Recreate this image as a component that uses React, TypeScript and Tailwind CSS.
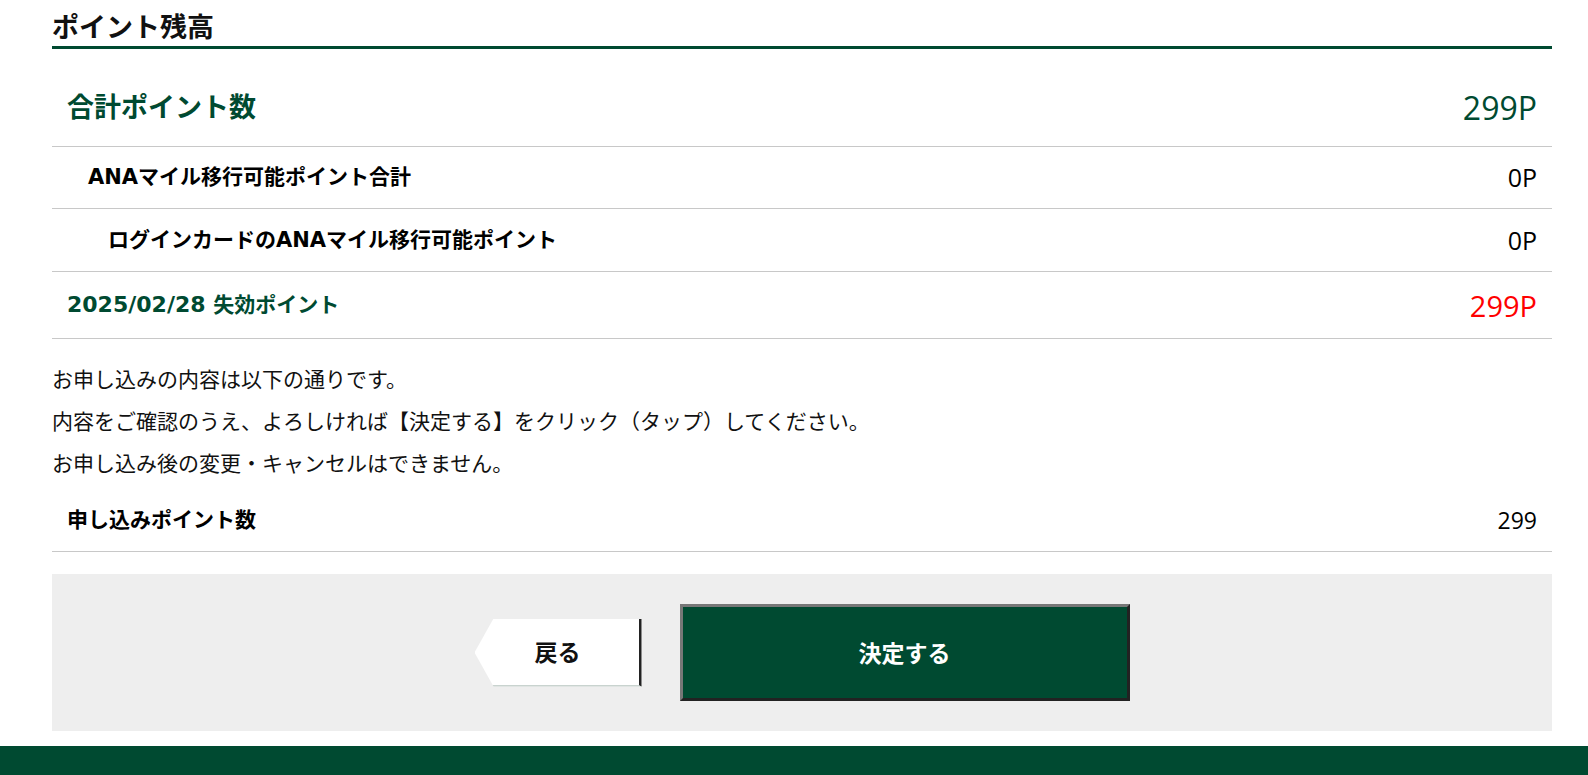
import React from "react";

const GREEN = "text-[#004a31]";

function Row({
  label,
  value,
  labelClass,
  valueClass,
  heightClass,
  padClass,
}: {
  label: React.ReactNode;
  value: string;
  labelClass: string;
  valueClass: string;
  heightClass: string;
  padClass: string;
}) {
  return (
    <div className={`flex items-center justify-between border-b border-[#c8c8c8] pr-[15px] ${heightClass} ${padClass}`}>
      <div className={`font-['DejaVu_Sans','Noto_Sans_CJK_JP',sans-serif] font-bold leading-none ${labelClass}`}>{label}</div>
      <div className={`font-['Open_Sans','Noto_Sans',sans-serif] leading-none ${valueClass}`}>{value}</div>
    </div>
  );
}

export default function App() {
  return (
    <div className="w-[1588px] bg-white font-['Noto_Sans_CJK_JP',sans-serif] text-black">
      <div className="ml-[52px] w-[1500px]">
        <h2 className="border-b-[3px] border-[#004a31] pt-[6px] text-[27px] font-bold leading-[40px] text-[#111]">
          ポイント残高
        </h2>
        <div className="mt-[20px]">
          <Row
            label="合計ポイント数"
            value="299P"
            labelClass={`text-[27px] ${GREEN}`}
            valueClass={`text-[32px] ${GREEN}`}
            heightClass="h-[78px]"
            padClass="pl-[15px]"
          />
          <Row
            label="ANAマイル移行可能ポイント合計"
            value="0P"
            labelClass="text-[21px] text-black"
            valueClass="text-[25px] text-black"
            heightClass="h-[62px]"
            padClass="pl-[36px]"
          />
          <Row
            label="ログインカードのANAマイル移行可能ポイント"
            value="0P"
            labelClass="text-[21px] text-black"
            valueClass="text-[25px] text-black"
            heightClass="h-[63px]"
            padClass="pl-[56px]"
          />
          <Row
            label={
              <>
                <span className="text-[22px]">2025/02/28 </span>
                <span>失効ポイント</span>
              </>
            }
            value="299P"
            labelClass={`text-[21px] ${GREEN}`}
            valueClass="text-[29px] text-[#ff0000]"
            heightClass="h-[67px]"
            padClass="pl-[15px]"
          />
        </div>
        <div className="pt-[18px] text-[21px] leading-[42px] text-[#111]">
          <p>お申し込みの内容は以下の通りです。</p>
          <p>内容をご確認のうえ、よろしければ【決定する】をクリック（タップ）してください。</p>
          <p>お申し込み後の変更・キャンセルはできません。</p>
        </div>
        <div className="mt-[6px]">
          <Row
            label="申し込みポイント数"
            value="299"
            labelClass="text-[21px] text-black"
            valueClass="text-[23px] text-black"
            heightClass="h-[63px]"
            padClass="pl-[15px]"
          />
        </div>
        <div className="mt-[22px] flex h-[157px] items-center justify-center gap-[38px] bg-[#eeeeee]">
          <button className="flex h-[68px] w-[167px] items-center justify-center border-r-[3px] border-b-2 border-r-[#222222] border-b-[#c9d3cf] bg-white pl-[2px] text-[23px] font-bold text-[#111] [clip-path:polygon(19px_0,100%_0,100%_100%,19px_100%,0_50%)]">
            戻る
          </button>
          <button className="flex h-[97px] w-[450px] items-center justify-center border-[3px] border-t-[#777777] border-l-[#777777] border-r-[#222222] border-b-[#222222] bg-[#004a31] text-[23px] font-bold text-white">
            決定する
          </button>
        </div>
      </div>
      <div className="mt-[15px] h-[29px] w-full bg-[#004a31]" />
    </div>
  );
}
